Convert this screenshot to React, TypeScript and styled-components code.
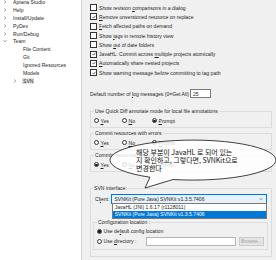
import React from 'react';
import styled, { createGlobalStyle } from 'styled-components';

const GlobalStyle = createGlobalStyle`
  html, body { margin: 0; padding: 0; }
  body {
    background: #f0f0f0;
    font-family: "Liberation Sans", Arial, sans-serif;
  }
`;

const Window = styled.div`
  position: relative;
  width: 276px;
  height: 260px;
  overflow: hidden;
  display: flex;
  font-size: 5.1px;
  color: #1e1e1e;
`;

/* ---------- tree ---------- */

const TreePanel = styled.div`
  width: 81px;
  flex: none;
  background: #fff;
  border-right: 1px solid #d4d4d4;
  overflow: hidden;
`;

const TreeList = styled.ul`
  list-style: none;
  margin: -2px 0 0;
  padding: 0;
`;

const TreeRow = styled.li<{ $depth: number }>`
  height: 7.9px;
  display: flex;
  align-items: center;
  padding-left: ${p => p.$depth * 10}px;
  white-space: nowrap;
`;

const Toggle = styled.span`
  width: 9px;
  margin-right: 4px;
  display: flex;
  justify-content: center;
  align-items: center;
  flex: none;
`;

const TreeLabel = styled.span<{ $selected?: boolean }>`
  padding: 0 1px;
  margin-left: -1px;
  background: ${p => (p.$selected ? '#e2e2e2' : 'transparent')};
`;

/* ---------- content ---------- */

const Content = styled.div`
  flex: 1;
  display: flex;
  flex-direction: column;
  padding: 3px 4px 0 8px;
  min-width: 0;
`;

const CheckRow = styled.label`
  height: 9.3px;
  display: flex;
  align-items: center;
  gap: 2px;
  white-space: nowrap;
`;

const Text = styled.span`
  white-space: pre;
`;

const Box = styled.span`
  width: 5px;
  height: 5px;
  flex: none;
  border: 0.8px solid #333;
  background: #fff;
  display: flex;
  align-items: center;
  justify-content: center;
`;

const Mn = styled.span`
  text-decoration: underline;
  text-decoration-thickness: 0.5px;
  text-underline-offset: 0.6px;
`;

const FieldRow = styled.div`
  margin-top: 12px;
  height: 9px;
  display: flex;
  align-items: center;
  gap: 1px;
  white-space: nowrap;
`;

const NumInput = styled.span`
  width: 21px;
  height: 9px;
  box-sizing: border-box;
  border: 0.8px solid #7a7a7a;
  background: #fff;
  padding-left: 2px;
  display: flex;
  align-items: center;
`;

const Group = styled.fieldset<{ $top: number; $pad?: string }>`
  margin: ${p => p.$top}px 0 0;
  padding: ${p => p.$pad || '1px 3px 2px'};
  border: 1px solid #dcdcdc;
  min-width: 0;
  position: relative;
`;

const Legend = styled.legend`
  padding: 0 1px;
  line-height: 7px;
  white-space: nowrap;
`;

const RadioRow = styled.div<{ $h?: number }>`
  height: ${p => p.$h || 9}px;
  display: flex;
  align-items: center;
  white-space: nowrap;
`;

const RadioOpt = styled.label<{ $w?: number }>`
  display: flex;
  align-items: center;
  gap: 1.5px;
  ${p => (p.$w ? `width: ${p.$w}px;` : '')}
`;

const Circle = styled.span<{ $on?: boolean }>`
  width: 5px;
  height: 5px;
  flex: none;
  box-sizing: border-box;
  border-radius: 50%;
  border: 0.8px solid #333;
  background: #fff;
  display: flex;
  align-items: center;
  justify-content: center;
  &::after {
    content: '';
    width: 2.4px;
    height: 2.4px;
    border-radius: 50%;
    background: ${p => (p.$on ? '#1a1a1a' : 'transparent')};
  }
`;

const ClientRow = styled.div`
  position: relative;
  height: 10px;
  margin-top: 1.5px;
  padding-left: 2px;
  display: flex;
  align-items: center;
  gap: 2px;
  white-space: nowrap;
`;

const Combo = styled.div`
  position: relative;
  flex: 1;
  height: 9.5px;
  box-sizing: border-box;
  border: 0.8px solid #0078d7;
  background: #e5f1fb;
  display: flex;
  align-items: center;
  justify-content: space-between;
  padding: 0 3px 0 2px;
  margin-right: 1px;
`;

const DropList = styled.ul`
  position: absolute;
  left: -0.8px;
  right: -0.8px;
  top: 100%;
  margin: 0;
  padding: 0;
  list-style: none;
  background: #fff;
  border: 0.8px solid #7a7a7a;
  z-index: 2;
`;

const DropItem = styled.li<{ $active?: boolean }>`
  height: 7.2px;
  display: flex;
  align-items: center;
  padding-left: 2px;
  background: ${p => (p.$active ? '#0078d7' : '#fff')};
  color: ${p => (p.$active ? '#fff' : '#1e1e1e')};
`;

const DirInput = styled.span`
  flex: 1;
  height: 9px;
  box-sizing: border-box;
  border: 0.8px solid #b5b5b5;
  background: #fff;
  margin: 0 3px 0 10px;
`;

const BrowseButton = styled.span`
  width: 25px;
  height: 9.5px;
  box-sizing: border-box;
  border: 0.8px solid #cacaca;
  background: #e6e6e6;
  color: #a0a0a0;
  display: flex;
  align-items: center;
  justify-content: center;
`;

/* ---------- callout ---------- */

const Callout = styled.div`
  position: absolute;
  left: 0;
  top: 0;
  width: 276px;
  height: 260px;
  pointer-events: none;
  z-index: 5;
`;

const CalloutText = styled.div`
  position: absolute;
  left: 136px;
  top: 147.5px;
  font-family: "Noto Sans CJK KR", "Noto Sans", sans-serif;
  font-size: 7px;
  line-height: 8px;
  color: #111;
  white-space: nowrap;
`;

function Chevron({ open }: { open?: boolean }) {
  return (
    <svg width="4" height="4" viewBox="0 0 4 4">
      <path
        d={open ? 'M0.5 1.2 L2 2.8 L3.5 1.2' : 'M1.2 0.5 L2.8 2 L1.2 3.5'}
        fill="none"
        stroke="#555"
        strokeWidth="0.6"
      />
    </svg>
  );
}

function Check({ on }: { on?: boolean }) {
  return (
    <Box>
      {on && (
        <svg width="4" height="4" viewBox="0 0 4 4">
          <path d="M0.5 2 L1.6 3.1 L3.5 0.8" fill="none" stroke="#222" strokeWidth="0.7" />
        </svg>
      )}
    </Box>
  );
}

const tree = [
  { label: 'Aptana Studio', depth: 0, toggle: 'closed' },
  { label: 'Help', depth: 0, toggle: 'closed' },
  { label: 'Install/Update', depth: 0, toggle: 'closed' },
  { label: 'PyDev', depth: 0, toggle: 'closed' },
  { label: 'Run/Debug', depth: 0, toggle: 'closed' },
  { label: 'Team', depth: 0, toggle: 'open' },
  { label: 'File Content', depth: 1 },
  { label: 'Git', depth: 1 },
  { label: 'Ignored Resources', depth: 1 },
  { label: 'Models', depth: 1 },
  { label: 'SVN', depth: 1, toggle: 'closed', selected: true },
];

function Radio({ on, w, children }: { on?: boolean; w?: number; children: React.ReactNode }) {
  return (
    <RadioOpt $w={w}>
      <Circle $on={on} />
      <Text>{children}</Text>
    </RadioOpt>
  );
}

function YesNoPrompt({ value }: { value: 'yes' | 'no' | 'prompt' }) {
  return (
    <RadioRow>
      <Radio w={28} on={value === 'yes'}><Mn>Y</Mn>es</Radio>
      <Radio w={30} on={value === 'no'}><Mn>N</Mn>o</Radio>
      <Radio on={value === 'prompt'}><Mn>P</Mn>rompt</Radio>
    </RadioRow>
  );
}

export default function App() {
  return (
    <>
      <GlobalStyle />
      <Window>
        <TreePanel>
          <TreeList>
            {tree.map(t => (
              <TreeRow key={t.label} $depth={t.depth}>
                <Toggle>{t.toggle && <Chevron open={t.toggle === 'open'} />}</Toggle>
                <TreeLabel $selected={t.selected}>{t.label}</TreeLabel>
              </TreeRow>
            ))}
          </TreeList>
        </TreePanel>

        <Content>
          <CheckRow><Check /><Text>Show revision <Mn>c</Mn>omparisons in a dialog</Text></CheckRow>
          <CheckRow><Check on /><Text><Mn>R</Mn>emove unversioned resource on replace</Text></CheckRow>
          <CheckRow><Check /><Text><Mn>F</Mn>etch affected paths on demand</Text></CheckRow>
          <CheckRow><Check /><Text>Show <Mn>t</Mn>ags in remote history view</Text></CheckRow>
          <CheckRow><Check /><Text>Show <Mn>o</Mn>ut of date folders</Text></CheckRow>
          <CheckRow><Check on /><Text>JavaHL: Commit across <Mn>m</Mn>ultiple projects atomically</Text></CheckRow>
          <CheckRow><Check on /><Text><Mn>A</Mn>utomatically share nested projects</Text></CheckRow>
          <CheckRow><Check on /><Text>Show warning message before committing to tag path</Text></CheckRow>

          <FieldRow>
            <Text>Default number of <Mn>l</Mn>og messages (0=Get All)</Text>
            <NumInput>25</NumInput>
          </FieldRow>

          <Group $top={10}>
            <Legend>Use Quick Diff annotate mode for local file annotations</Legend>
            <YesNoPrompt value="prompt" />
          </Group>

          <Group $top={2}>
            <Legend>Commit resources with errors</Legend>
            <YesNoPrompt value="prompt" />
          </Group>

          <Group $top={2}>
            <Legend>Commit resources with warnings</Legend>
            <YesNoPrompt value="yes" />
          </Group>

          <Group $top={13} $pad="0 3px 6px 2px">
            <Legend>SVN interface:</Legend>
            <ClientRow>
              <Text>Cl<Mn>i</Mn>ent:</Text>
              <Combo>
                <span>SVNKit (Pure Java) SVNKit v1.3.5.7406</span>
                <Chevron open />
                <DropList>
                  <DropItem>JavaHL (JNI) 1.6.17 (r1128011)</DropItem>
                  <DropItem $active>SVNKit (Pure Java) SVNKit v1.3.5.7406</DropItem>
                </DropList>
              </Combo>
            </ClientRow>

            <Group $top={15}>
              <Legend>Configuration location :</Legend>
              <RadioRow>
                <Radio on>Use de<Mn>f</Mn>ault config location</Radio>
              </RadioRow>
              <RadioRow $h={11}>
                <Radio>Use <Mn>d</Mn>irectory :</Radio>
                <DirInput />
                <BrowseButton>Browse...</BrowseButton>
              </RadioRow>
            </Group>
          </Group>
        </Content>

        <Callout>
          <svg width="276" height="260" viewBox="0 0 276 260">
            <path
              d="M150 177.2 L145 188 L173 179.5 A83 20 0 1 0 150 177.2 Z"
              fill="#fff"
              fillOpacity="0.82"
              stroke="#111"
              strokeWidth="0.8"
            />
          </svg>
          <CalloutText>
            해당 부분이 JavaHL 로 되어 있는<br />
            지 확인하고, 그렇다면, SVNKit으로<br />
            변경한다
          </CalloutText>
        </Callout>
      </Window>
    </>
  );
}
